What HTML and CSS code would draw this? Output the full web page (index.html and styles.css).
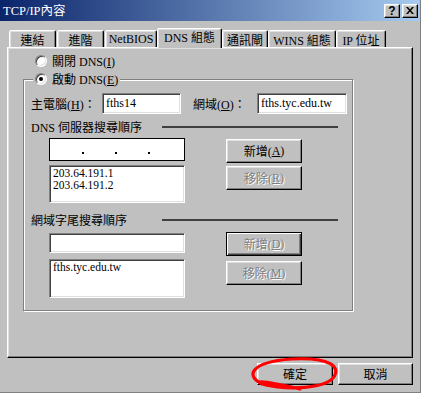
FILE: index.html
```html
<!DOCTYPE html>
<html lang="zh-Hant">
<head>
<meta charset="utf-8">
<title>TCP/IP內容</title>
<link rel="stylesheet" href="styles.css">
</head>
<body>
<div class="window">
  <div class="titlebar">
    <span class="title">TCP/IP內容</span>
    <div class="tbtns">
      <span class="tbtn">?</span>
      <span class="tbtn"><svg width="8" height="7" viewBox="0 0 8 7"><path d="M0 0h2l2 2.5L6 0h2L5 3.5 8 7H6L4 4.5 2 7H0l3-3.5z" fill="#000"/></svg></span>
    </div>
  </div>
  <div class="tabstrip">
    <div class="tab t1">連結</div>
    <div class="tab t2">進階</div>
    <div class="tab t3">NetBIOS</div>
    <div class="tab t4 sel">DNS 組態</div>
    <div class="tab t5">通訊閘</div>
    <div class="tab t6">WINS 組態</div>
    <div class="tab t7">IP 位址</div>
  </div>
  <div class="panel">
    <div class="radio-row"><span class="rb"></span><span>關閉 DNS(<u>I</u>)</span></div>
    <div class="group">
      <div class="legend"><span class="rb on"></span><span>啟動 DNS(<u>E</u>)</span></div>
      <div class="hostrow">
        <span class="lbl-host">主電腦(<u>H</u>)：</span>
        <div class="field f-host">fths14</div>
        <span class="lbl-domain">網域(<u>O</u>)：</span>
        <div class="field f-domain">fths.tyc.edu.tw</div>
      </div>
      <div class="header h1"><span class="htext">DNS 伺服器搜尋順序</span><span class="hline"></span></div>
      <div class="block b1">
        <div class="col c1">
          <div class="ipbox"><span class="dot first"></span><span class="dot"></span><span class="dot"></span></div>
          <div class="field list l1"><div class="li">203.64.191.1</div><div class="li">203.64.191.2</div></div>
        </div>
        <div class="btns bt1">
          <div class="btn">新增(<u>A</u>)</div>
          <div class="btn disabled">移除(<u>R</u>)</div>
        </div>
      </div>
      <div class="header h2"><span class="htext">網域字尾搜尋順序</span><span class="hline"></span></div>
      <div class="block b2">
        <div class="col c2">
          <div class="field sfx"></div>
          <div class="field list l2"><div class="li">fths.tyc.edu.tw</div></div>
        </div>
        <div class="btns bt2">
          <div class="btn def disabled">新增(<u>D</u>)</div>
          <div class="btn disabled">移除(<u>M</u>)</div>
        </div>
      </div>
    </div>
  </div>
  <div class="footer">
    <div class="btn fbtn ok">確定</div>
    <div class="btn fbtn cancel">取消</div>
  </div>
  <svg class="mark" width="100" height="42" viewBox="245 353 100 42">
    <path d="M266 385 C 244 378, 248 362, 292 359 C 330 357, 342 367, 333 378 C 324 388, 290 391, 262 384 C 255 381, 262 380, 300 389" fill="none" stroke="#ff0000" stroke-width="3.2" stroke-linecap="round"/>
  </svg>
</div>
</body>
</html>
```

FILE: styles.css
```css
html, body {
  margin: 0;
  padding: 0;
  background: #c0c0c0;
}
body {
  font-family: "Liberation Serif", "Noto Sans CJK TC", serif;
  font-size: 12px;
  color: #000;
}
u { text-decoration: underline; text-underline-offset: 1px; }

.window {
  width: 421px;
  height: 393px;
  box-sizing: border-box;
  background: #c0c0c0;
  border-right: 1px solid #808080;
  border-bottom: 1px solid #808080;
  display: flex;
  flex-direction: column;
  position: relative;
  overflow: hidden;
}

.titlebar {
  width: 419px;
  height: 21px;
  box-sizing: border-box;
  flex: none;
  background: linear-gradient(to right, #0a246a, #a6caf0);
  display: flex;
  align-items: center;
  padding-left: 3px;
  color: #fff;
}
.title { font-size: 12.5px; line-height: 14px; }
.tbtns {
  margin-left: auto;
  margin-right: 1px;
  display: flex;
  gap: 2px;
}
.tbtn {
  width: 16px;
  height: 14px;
  box-sizing: border-box;
  background: #c0c0c0;
  border: 1px solid;
  border-color: #fff #000 #000 #fff;
  box-shadow: inset -1px -1px #808080, inset 1px 1px #dfdfdf;
  display: flex;
  align-items: center;
  justify-content: center;
  color: #000;
  font: bold 12px "Liberation Sans", sans-serif;
}

.tabstrip {
  height: 26px;
  flex: none;
  display: flex;
  align-items: flex-end;
}
.tab {
  height: 17px;
  box-sizing: border-box;
  border: 1px solid;
  border-bottom: none;
  border-color: #fff #000 transparent #fff;
  border-radius: 2px 2px 0 0;
  box-shadow: inset -1px 0 #808080, inset 1px 1px #dfdfdf;
  background: #c0c0c0;
  display: flex;
  align-items: center;
  justify-content: center;
  padding-top: 1px;
  white-space: nowrap;
}
.tab.sel {
  height: 20px;
  margin-bottom: -1px;
  position: relative;
  z-index: 2;
  padding-top: 0;
  padding-bottom: 3px;
}
.t1 { width: 47px; margin-left: 9px; }
.t2 { width: 47px; margin-left: 1px; }
.t3 { width: 52px; margin-left: 1px; }
.t4 { width: 65px; margin-left: 0; }
.t5 { width: 46px; }
.t6 { width: 68px; }
.t7 { width: 50px; }

.panel {
  width: 406px;
  height: 311px;
  flex: none;
  margin-left: 7px;
  box-sizing: border-box;
  border: 1px solid;
  border-color: #fff #000 #000 #fff;
  box-shadow: inset -1px -1px #808080, inset 1px 1px #dfdfdf;
  padding: 6px 0 0 15px;
  display: flex;
  flex-direction: column;
  align-items: flex-start;
  position: relative;
  z-index: 1;
}

.radio-row {
  display: flex;
  align-items: center;
  height: 14px;
  margin-left: 12px;
}
.rb {
  width: 12px;
  height: 12px;
  flex: none;
  box-sizing: border-box;
  border-radius: 50%;
  background: #fff;
  border: 1px solid;
  border-color: #808080 #fff #fff #808080;
  box-shadow: inset 1px 1px #404040, inset -1px -1px #dfdfdf;
  display: flex;
  align-items: center;
  justify-content: center;
  margin-right: 5px;
}
.rb.on::after {
  content: "";
  width: 4px;
  height: 4px;
  border-radius: 50%;
  background: #000;
}

.group {
  margin-top: 11px;
  width: 330px;
  height: 232px;
  box-sizing: border-box;
  border: 1px solid #808080;
  box-shadow: 1px 1px 0 #fff, inset 1px 1px 0 #fff;
  padding-left: 7px;
  display: flex;
  flex-direction: column;
  align-items: flex-start;
}
.legend {
  margin-top: -8px;
  margin-left: 2px;
  padding: 0 2px;
  height: 14px;
  background: #c0c0c0;
  display: flex;
  align-items: center;
}

.hostrow {
  margin-top: 7px;
  height: 21px;
  display: flex;
  align-items: center;
}
.lbl-host { width: 71px; white-space: nowrap; }
.lbl-domain { width: 64px; margin-left: 12px; white-space: nowrap; }

.field {
  background: #fff;
  box-sizing: border-box;
  border: 1px solid;
  border-color: #808080 #fff #fff #808080;
  box-shadow: inset 1px 1px #404040, inset -1px -1px #dfdfdf;
  padding: 0 2px;
  white-space: nowrap;
}
.f-host, .f-domain {
  height: 21px;
  display: flex;
  align-items: center;
  padding-left: 3px;
}
.f-host { width: 79px; }
.f-domain { width: 90px; }

.header {
  height: 13px;
  display: flex;
  align-items: center;
}
.h1 { margin-top: 6px; }
.h2 { margin-top: 10px; }
.htext { width: 131px; white-space: nowrap; }
.hline {
  width: 176px;
  height: 2px;
  background: #404040;
}

.block {
  display: flex;
  align-items: flex-start;
  margin-left: 18px;
}
.b1 { margin-top: 5px; }
.b2 { margin-top: 6px; }
.col {
  display: flex;
  flex-direction: column;
  width: 136px;
}
.c1 { gap: 4px; }
.c2 { gap: 6px; margin-top: 1px; }

.ipbox {
  height: 23px;
  box-sizing: border-box;
  background: #fff;
  border: 1px solid #000;
  display: flex;
  align-items: flex-end;
  padding-bottom: 6px;
}
.dot {
  width: 2px;
  height: 2px;
  background: #000;
  margin-left: 31px;
}
.dot.first { margin-left: 32px; }

.list {
  padding: 1px 3px 0;
  display: flex;
  flex-direction: column;
}
.li {
  height: 12px;
  line-height: 12px;
  font-size: 11.5px;
}
.l1 { height: 38px; }
.l2 { height: 39px; }
.sfx { height: 20px; }

.btns {
  display: flex;
  flex-direction: column;
  margin-left: 41px;
}
.bt1 { gap: 3px; margin-top: 1px; }
.bt2 { gap: 5px; }

.btn {
  width: 76px;
  height: 24px;
  box-sizing: border-box;
  background: #c0c0c0;
  border: 1px solid;
  border-color: #fff #000 #000 #fff;
  box-shadow: inset -1px -1px #808080, inset 1px 1px #dfdfdf;
  display: flex;
  align-items: center;
  justify-content: center;
  white-space: nowrap;
}
.btn.def {
  border-color: #000;
  box-shadow: inset 1px 1px #fff, inset -1px -1px #404040, inset -2px -2px #808080;
}
.btn.disabled {
  color: #808080;
  text-shadow: 1px 1px 0 #fff;
}

.footer {
  display: flex;
  justify-content: flex-end;
  gap: 5px;
  margin-top: 5px;
  padding-right: 7px;
}
.fbtn { height: 22px; }
.ok { width: 76px; }
.cancel { width: 75px; }

.mark {
  position: absolute;
  left: 245px;
  top: 353px;
  z-index: 5;
}
```
